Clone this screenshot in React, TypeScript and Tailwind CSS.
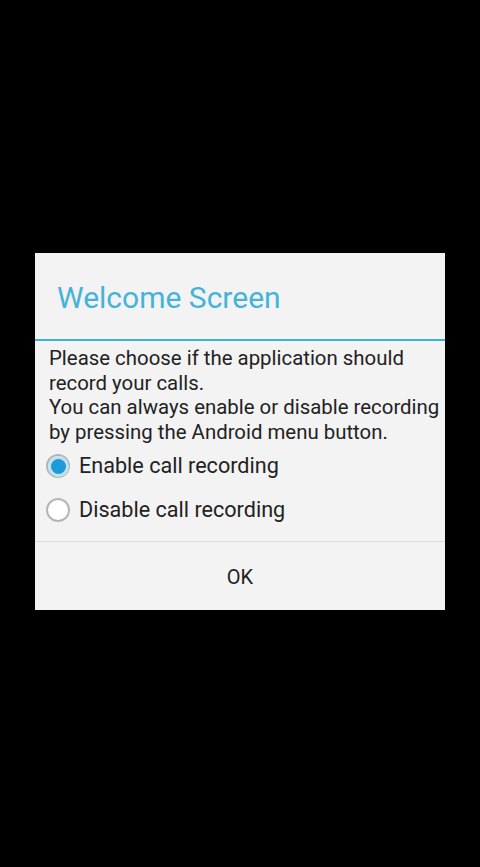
import React, { useState } from 'react';

export default function App() {
  const [enabled, setEnabled] = useState(true);

  const options = [
    { label: 'Enable call recording', value: true },
    { label: 'Disable call recording', value: false },
  ];

  return (
    <div className="w-[480px] h-[867px] bg-black pt-[253px]" style={{ fontFamily: 'Roboto, "Noto Sans", sans-serif' }}>
      <div className="mx-[35px] bg-[#f3f3f3]">
        {/* Title */}
        <div className="h-[86px] flex items-center pl-[22px] pt-[4px]">
          <h2 className="text-[30px] text-[#45b3d9] leading-none">Welcome Screen</h2>
        </div>
        <div className="h-[2px] bg-[#3fb0d8]" />

        {/* Message */}
        <div className="pl-[14px] pt-[5px] text-[20.4px] leading-[24.5px] text-[#222]">
          <p>Please choose if the application should record your calls.</p>
          <p>You can always enable or disable recording by pressing the Android menu button.</p>
        </div>

        {/* Options */}
        <div className="pb-[9px]">
          {options.map((o) => (
            <button
              key={o.label}
              onClick={() => setEnabled(o.value)}
              className="flex items-center h-[44px] w-full pl-[11px] text-left"
            >
              <span className="w-[24px] h-[24px] rounded-full border-2 border-[#b5b5b5] bg-white flex items-center justify-center">
                {enabled === o.value && (
                  <span className="w-[15px] h-[15px] rounded-full bg-[#1e9ad6] shadow-[0_0_0_3px_#bfe3f2]" />
                )}
              </span>
              <span className="ml-[9px] text-[21.6px] text-[#222]">{o.label}</span>
            </button>
          ))}
        </div>

        {/* Button bar */}
        <div className="border-t border-[#dcdcdc] h-[69px] flex items-center justify-center pt-[2px]">
          <button className="text-[20px] text-[#222]">OK</button>
        </div>
      </div>
    </div>
  );
}
